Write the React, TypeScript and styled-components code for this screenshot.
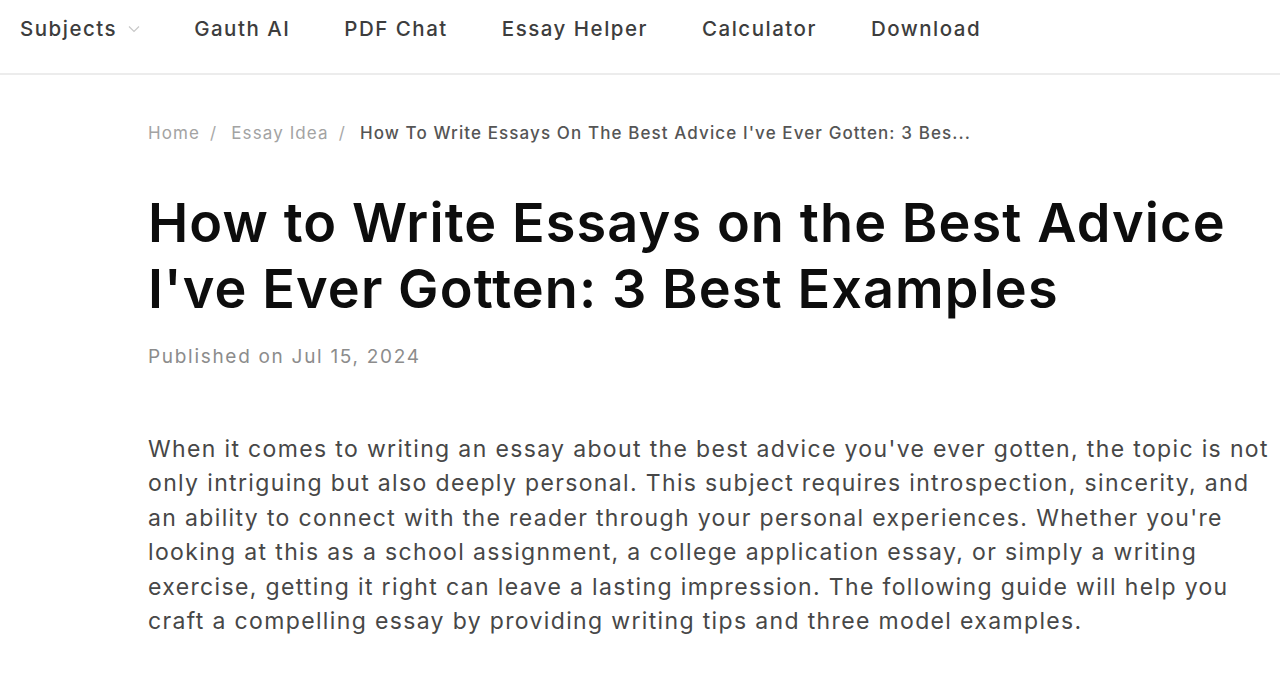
import React from "react";
import styled, { createGlobalStyle } from "styled-components";

const GlobalStyle = createGlobalStyle`
  * {
    box-sizing: border-box;
  }
  body {
    margin: 0;
    background: #ffffff;
    font-family: Inter, Roboto, "Noto Sans", sans-serif;
    color: #222;
  }
`;

const Header = styled.header`
  height: 75px;
  border-bottom: 2px solid #ececec;
  display: flex;
  align-items: flex-start;
  padding: 17px 20px 0;
`;

const NavList = styled.nav`
  display: flex;
  align-items: center;
  gap: 54px;
`;

const NavItem = styled.a`
  display: flex;
  align-items: center;
  gap: 11px;
  font-size: 20.5px;
  line-height: 24px;
  font-weight: 500;
  letter-spacing: 1.5px;
  color: #3d3d3d;
  text-decoration: none;
  white-space: nowrap;
`;

const Main = styled.main`
  padding: 46px 0 40px 148px;
`;

const Breadcrumb = styled.div`
  display: flex;
  align-items: center;
  font-size: 17px;
  line-height: 24px;
  letter-spacing: 1.1px;
  white-space: nowrap;
`;

const Crumb = styled.a<{ $current?: boolean }>`
  color: ${(p) => (p.$current ? "#555555" : "#a3a3a3")};
  font-weight: ${(p) => (p.$current ? 500 : 400)};
  text-decoration: none;
`;

const Sep = styled.span`
  color: #a8a8a8;
  margin: 0 14px 0 10px;
`;

const Title = styled.h1`
  margin: 45px 0 0;
  font-size: 54px;
  line-height: 66px;
  font-weight: 600;
  letter-spacing: 1.1px;
  color: #0d0d0d;
  max-width: 1126px;
`;

const Published = styled.div`
  margin-top: 23px;
  font-size: 19px;
  line-height: 24px;
  letter-spacing: 1.7px;
  color: #8c8c8c;
`;

const Paragraph = styled.p`
  margin: 63px 0 0;
  font-size: 23px;
  line-height: 34.4px;
  letter-spacing: 1.35px;
  color: #474747;
  max-width: 1126px;
`;

const Chevron = () => (
  <svg width="12" height="8" viewBox="0 0 12 8" fill="none">
    <path d="M1 1.5 L6 6.5 L11 1.5" stroke="#c8c8c8" strokeWidth="1.2" />
  </svg>
);

const navItems = ["Gauth AI", "PDF Chat", "Essay Helper", "Calculator", "Download"];

export default function App() {
  return (
    <>
      <GlobalStyle />
      <Header>
        <NavList>
          <NavItem href="#">
            Subjects
            <Chevron />
          </NavItem>
          {navItems.map((item) => (
            <NavItem key={item} href="#">
              {item}
            </NavItem>
          ))}
        </NavList>
      </Header>
      <Main>
        <Breadcrumb>
          <Crumb href="#">Home</Crumb>
          <Sep>/</Sep>
          <Crumb href="#">Essay Idea</Crumb>
          <Sep>/</Sep>
          <Crumb $current>
            How To Write Essays On The Best Advice I've Ever Gotten: 3 Bes...
          </Crumb>
        </Breadcrumb>
        <Title>
          How to Write Essays on the Best Advice I've Ever Gotten: 3 Best
          Examples
        </Title>
        <Published>Published on Jul 15, 2024</Published>
        <Paragraph>
          When it comes to writing an essay about the best advice you've ever
          gotten, the topic is not only intriguing but also deeply personal.
          This subject requires introspection, sincerity, and an ability to
          connect with the reader through your personal experiences. Whether
          you're looking at this as a school assignment, a college application
          essay, or simply a writing exercise, getting it right can leave a
          lasting impression. The following guide will help you craft a
          compelling essay by providing writing tips and three model examples.
        </Paragraph>
      </Main>
    </>
  );
}
